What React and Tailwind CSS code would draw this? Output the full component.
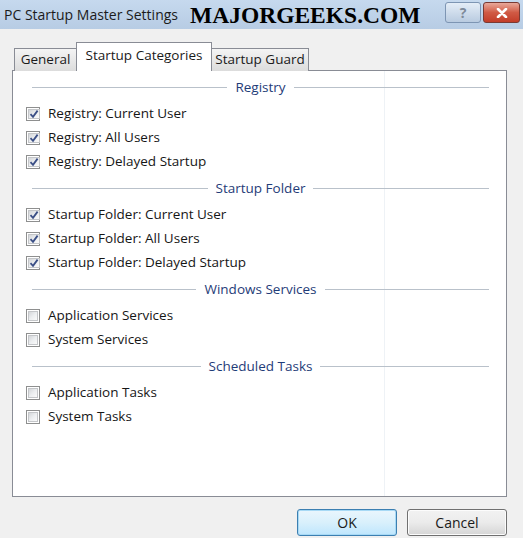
import React from "react";

const font = { fontFamily: '"Open Sans", "Noto Sans", sans-serif' };

function Check({ checked }) {
  return (
    <span className="w-[14px] h-[14px] border border-[#8e8f8f] bg-white p-[1px] flex shrink-0">
      <span className="flex-1 bg-gradient-to-br from-[#d4d6d9] via-[#eceef0] to-[#fafafa] border border-[#c4c6c9] flex items-center justify-center">
        {checked && (
          <svg width="10" height="10" viewBox="0 0 10 10">
            <path d="M1.5 5.2 L4 7.8 L8.6 1.6" fill="none" stroke="#3b4f86" strokeWidth="1.8" />
          </svg>
        )}
      </span>
    </span>
  );
}

function Header({ label }) {
  return (
    <div className="h-[29px] flex items-center pl-[19px] pr-[17px] gap-[8px]">
      <div className="flex-1 h-px bg-[#b9c1ca]" />
      <span className="text-[13.5px] text-[#1f3c78] leading-none whitespace-nowrap">{label}</span>
      <div className="flex-1 h-px bg-[#b9c1ca]" />
    </div>
  );
}

function Row({ label, checked }) {
  return (
    <div className="h-[24px] flex items-center pl-[13px] gap-[8px]">
      <Check checked={checked} />
      <span className="text-[13.5px] text-[#161616] leading-none whitespace-nowrap">{label}</span>
    </div>
  );
}

export default function App() {
  return (
    <div className="w-[523px] h-[538px] bg-[#f0f0f0] flex flex-col overflow-hidden" style={font}>
      <div className="h-[29px] bg-gradient-to-b from-[#c6d9ee] to-[#b7cce4] flex items-center pl-[4px] pr-[3px] shrink-0">
        <span className="w-[186px] text-[14px] text-[#1b1b1b] leading-none whitespace-nowrap">PC Startup Master Settings</span>
        <span
          className="text-[23.5px] font-bold text-black leading-none whitespace-nowrap mt-[3px]"
          style={{ fontFamily: '"Liberation Serif", "DejaVu Serif", serif' }}
        >
          MAJORGEEKS.COM
        </span>
        <div className="ml-auto flex items-start self-start mt-[2px] gap-[2px]">
          <div className="w-[36px] h-[21px] rounded-[3px] border border-[#7d95b3] bg-gradient-to-b from-[#e4edf7] to-[#b9cbe0] flex items-center justify-center">
            <span className="text-[14px] font-bold text-[#7e8a99] leading-none">?</span>
          </div>
          <div className="w-[37px] h-[21px] rounded-[3px] border border-[#7a3a33] bg-gradient-to-b from-[#e8a89a] via-[#d05a45] to-[#c23c28] flex items-center justify-center">
            <svg width="12" height="10" viewBox="0 0 12 10">
              <path d="M2 1 L10 9 M10 1 L2 9" stroke="#fff" strokeWidth="2.6" strokeLinecap="round" />
            </svg>
          </div>
        </div>
      </div>

      <div className="pl-[12px] pr-[16px] pt-[13px] flex flex-col">
        <div className="flex items-end h-[28px] pl-[2px] relative z-10">
          <div className="h-[23px] w-[63px] border border-[#898c95] border-b-0 bg-gradient-to-b from-[#f4f4f4] to-[#dcdcdc] flex items-center justify-center mb-[-1px] -mr-px">
            <span className="text-[13.5px] text-[#1a1a1a] leading-none whitespace-nowrap">General</span>
          </div>
          <div className="h-[29px] w-[136px] border border-[#898c95] border-b-0 bg-white flex items-start justify-center pt-[6px] mb-[-1px]">
            <span className="text-[13.5px] text-[#1a1a1a] leading-none whitespace-nowrap">Startup Categories</span>
          </div>
          <div className="h-[23px] w-[98px] border border-[#898c95] border-b-0 bg-gradient-to-b from-[#f4f4f4] to-[#dcdcdc] flex items-center justify-center mb-[-1px] -ml-px">
            <span className="text-[13.5px] text-[#1a1a1a] leading-none whitespace-nowrap">Startup Guard</span>
          </div>
        </div>

        <div className="h-[427px] border border-[#898c95] bg-white pt-[2px] relative">
          <div className="absolute top-0 bottom-0 left-[371px] w-px bg-[#eef2f6]" />
          <div className="relative">
            <Header label="Registry" />
            <Row label="Registry: Current User" checked />
            <Row label="Registry: All Users" checked />
            <Row label="Registry: Delayed Startup" checked />
            <Header label="Startup Folder" />
            <Row label="Startup Folder: Current User" checked />
            <Row label="Startup Folder: All Users" checked />
            <Row label="Startup Folder: Delayed Startup" checked />
            <Header label="Windows Services" />
            <Row label="Application Services" />
            <Row label="System Services" />
            <Header label="Scheduled Tasks" />
            <Row label="Application Tasks" />
            <Row label="System Tasks" />
          </div>
        </div>

        <div className="flex justify-end gap-[10px] pt-[12px]">
          <button className="w-[100px] h-[27px] rounded-[3px] border border-[#3c7fb1] bg-gradient-to-b from-[#eaf6fd] via-[#d9f0fc] to-[#bee6fd] shadow-[inset_0_0_0_1px_#a7d9f5] text-[14px] text-[#1a1a1a] leading-none">
            OK
          </button>
          <button className="w-[100px] h-[27px] rounded-[3px] border border-[#707070] bg-gradient-to-b from-[#f2f2f2] via-[#ebebeb] to-[#d5d5d5] shadow-[inset_0_0_0_1px_#fcfcfc] text-[14px] text-[#1a1a1a] leading-none">
            Cancel
          </button>
        </div>
      </div>
    </div>
  );
}
